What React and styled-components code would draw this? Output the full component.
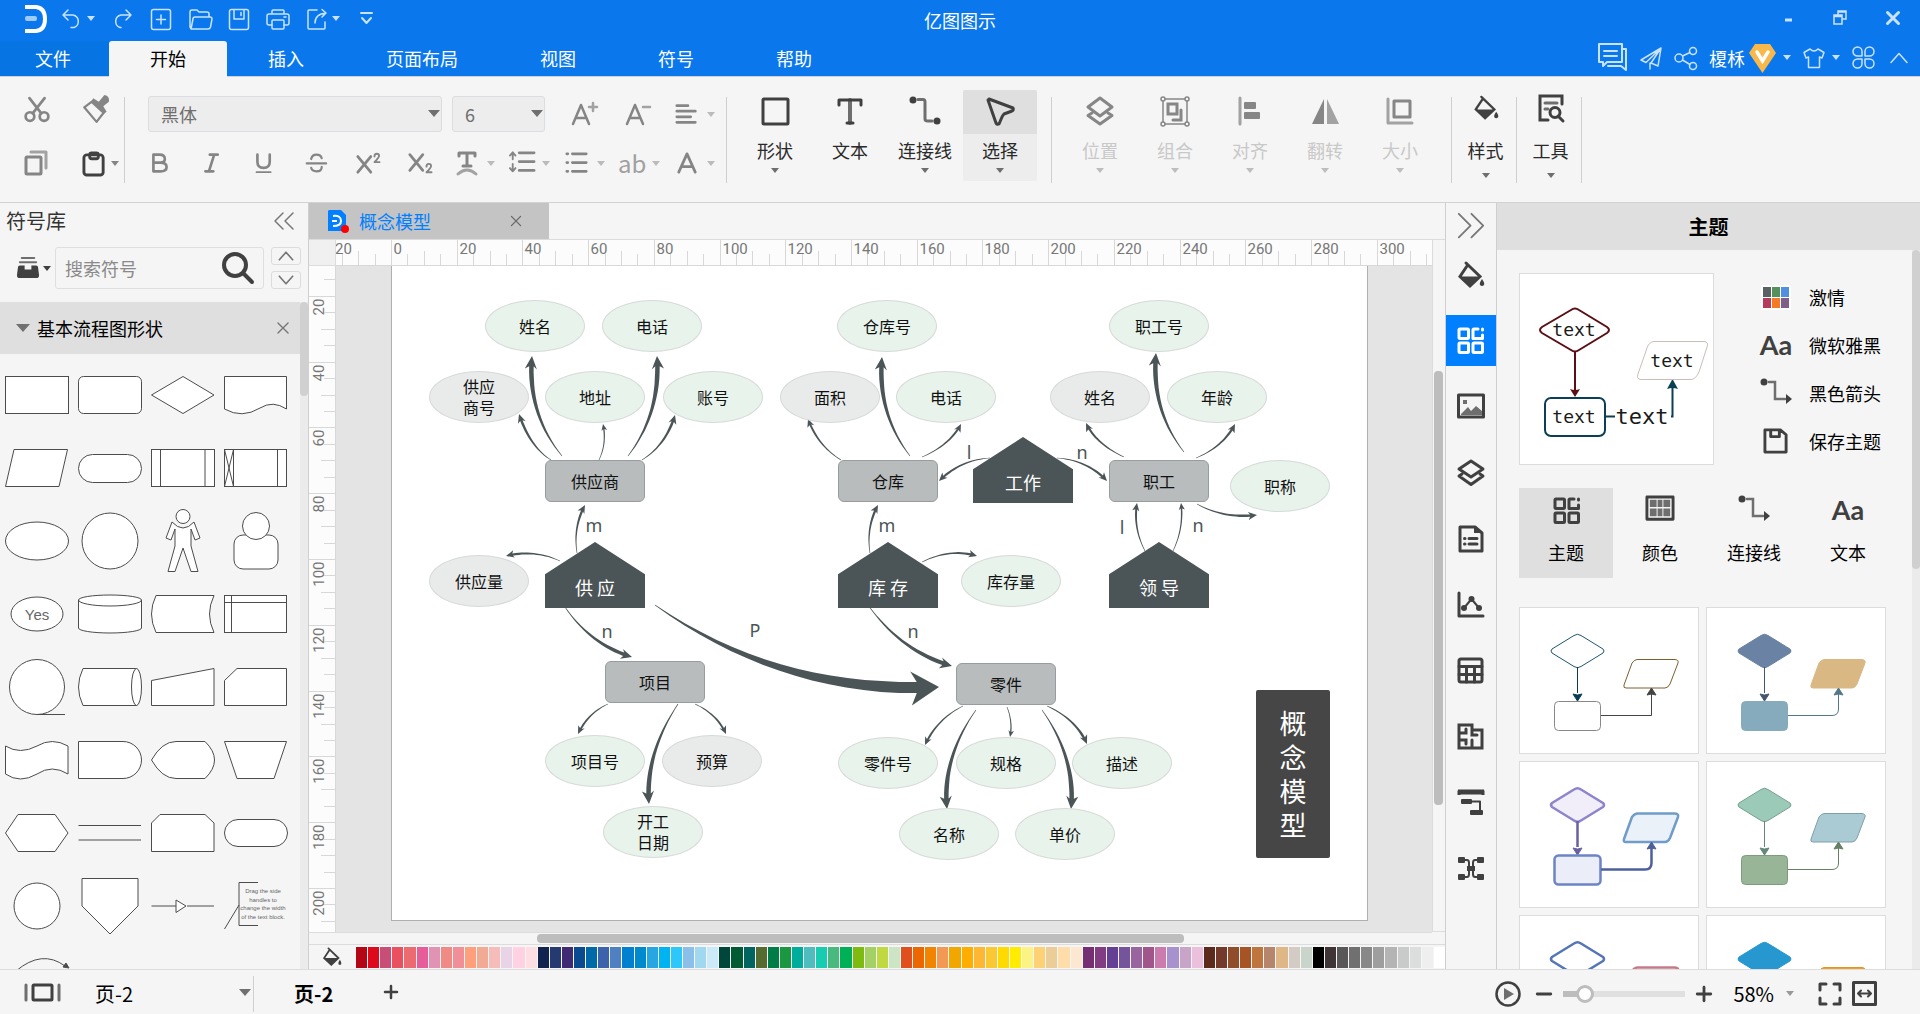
import React, { useState } from 'react'
import styled, { createGlobalStyle, css } from 'styled-components'

const GlobalStyle = createGlobalStyle`
  * {
    box-sizing: border-box;
  }

  body {
    margin: 0;
    background: #f5f5f5;
    color: #000;
    font-family: "Noto Sans CJK SC", "Noto Sans", sans-serif;
    font-size: 18px;
    line-height: 24px;
  }

  button, input, select {
    font: inherit;
    color: inherit;
    margin: 0;
    padding: 0;
    border: 0;
    background: none;
  }
`

/* ---------- icons ---------- */

const Svg = styled.svg`
  display: block;
  flex: none;
  fill: none;
  stroke: currentColor;
  stroke-width: ${props => props.$w || 2};
  stroke-linecap: round;
  stroke-linejoin: round;
  overflow: visible;

  .solid {
    fill: currentColor;
    stroke: none;
  }
  .soft {
    opacity: 0.75;
  }
`

const icons = {
  undo: <path d="M8 3 L3 8 L8 13 M3 8 H13 A6.5 6.5 0 0 1 14 20.500 H11" />,
  redo: <path d="M16 3 L21 8 L16 13 M21 8 H11 A6.500 6.500 0 0 0 10 20.500 H11" />,
  plusBox: <><rect x="2.500" y="2.500" width="19" height="20" rx="2" /><path d="M12 8 V17 M7.500 12.500 H16.500" /></>,
  folder: <path d="M3 22 L2 20 V5 Q2 3 4 3 H9 L11 5 H19 Q21 5 21 7 V10 M3 22 H20 Q22 22 22.500 20 L24 12 Q24 10 22 10 H7 Q5 10 5 12 L3 22" />,
  disk: <><rect x="2.500" y="2.500" width="19" height="20" rx="2" /><path d="M7 3 V12 H17 V3 M14 5.500 V8.500" /></>,
  print: <><path d="M6 7 V4 Q6 3 7 3 H17 Q18 3 18 4 V7 M6 18 H3 Q1 18 1 16 V9 Q1 7 3 7 H21 Q23 7 23 9 V16 Q23 18 21 18 H18" /><rect x="6" y="13" width="12" height="9" rx="1" /><path d="M18 10 H20" /></>,
  exportIcon: <path d="M12 3 H4 Q3 3 3 4 V21 Q3 22 4 22 H19 Q20 22 20 21 V15 M10 16 Q10 7 21 6 M17 2.500 L21 6 L17 10" />,
  more: <path d="M6 6 H17 M7 11 L11.500 16 L16 11" />,
  comment: <><path d="M2 2 H25 V20 H10 L6 24 V20 H2 Z M25 7 H29 V24 V28 L24 24 H11 M7 9 H20 M7 14 H20" /></>,
  send: <path d="M22 2 L2 14 L7 16.500 L22 2 L19 20 L12 17 L22 2 M11 17 V23" />,
  share: <><circle cx="5" cy="12" r="4" /><circle cx="19" cy="5" r="3.500" /><circle cx="19" cy="20" r="3.500" /><path d="M8.500 10 L16 6.500 M8.500 14 L16 18.500" /></>,
  shirt: <path d="M8 3 L2 6.500 L4 12 L6.500 11 V21.500 H17.500 V11 L20 12 L22 6.500 L16 3 Q12 7 8 3 Z" />,
  clover: <path d="M11 11 H6.500 A4.500 4.500 0 1 1 11 6.500 Z M14 11 H18.500 A4.500 4.500 0 1 0 14 6.500 Z M11 14 H6.500 A4.500 4.500 0 1 0 11 18.500 Z M14 14 H18.500 A4.500 4.500 0 1 1 14 18.500 Z" />,
  chevron: <path d="M4 16.500 L12 7.500 L20 16.500" />,
  minimize: <path d="M8 14 H15" strokeWidth="3" strokeLinecap="butt" />,
  restore: <path d="M5 9 H13 V18 H5 Z M5 10.500 H13 M9 9 V5 H17 V13 H13 M9 6 H17" strokeLinejoin="miter" />,
  close: <path d="M6.500 6.500 L17.500 17.500 M17.500 6.500 L6.500 17.500" />,
  cut: <><circle cx="5.500" cy="19" r="4" /><circle cx="18.500" cy="19" r="4" /><path d="M8 16 L19 2 M16 16 L5 2" /></>,
  painter: <><path d="M10 5 L2 11 L13 24 L20 15 Z" /><path className="solid" d="M10 3 L15 6 L20 0 Q25 1 24 6 L19 10 L22 15 L19 17 L8 7 Z" /></>,
  copy: <><rect x="2" y="7" width="15" height="17" rx="1" /><path className="soft" d="M7 2 H22 V18" /></>,
  paste: <><rect x="2" y="4" width="20" height="21" rx="3" /><rect x="8" y="2" width="9" height="6" rx="2" /></>,
  fontUp: <><path d="M2 23 L10 4 L18 23 M5 17 H15" /><path className="soft" d="M22 2 V10 M18 6 H26" /></>,
  fontDown: <><path d="M2 23 L10 4 L18 23 M5 17 H15" /><path className="soft" d="M18 6 H25" /></>,
  align: <path d="M2 4 H14 M2 10 H22 M2 16 H17 M2 22 H22" strokeWidth="3" />,
  bold: <path d="M5 3 H12 Q18 3 18 8 Q18 12 13 12 H5 M13 12 Q20 12 20 17 Q20 22 13 22 H5 V3" />,
  italic: <path d="M10 3 H19 M5 22 H14 M15 3 L9 22" />,
  underline: <><path d="M5 3 V11 Q5 18 12 18 Q19 18 19 11 V3" /><path d="M4 23 H20" strokeWidth="2" /></>,
  strike: <path d="M2 13 H24 M19 7 Q18 3 13 3 Q8 3 7 8 M19 17 Q19 22 13 22 Q8 22 7 18" />,
  sup: <><path d="M2 6 L16 23 M16 6 L2 23" /><path d="M20 6 Q20 3 22.500 3 Q25 3 25 5.500 Q25 7 20 12 H25.500" strokeWidth="2" /></>,
  sub: <><path d="M2 4 L16 21 M16 4 L2 21" /><path d="M20 17 Q20 14 22.500 14 Q25 14 25 16.500 Q25 18 20 23 H25.500" strokeWidth="2" /></>,
  textCurve: <><path d="M5 6 V3 H21 V6 M13 3 V16 M9 16 H17" /><path className="soft" d="M4 24 Q13 16 22 24" /></>,
  spacing: <><path d="M11 3 H27 M11 12.500 H27 M11 22 H27" strokeWidth="3" /><path d="M4 3 V10 M1 6 L4 2.500 L7 6 M4 15 V23 M1 19.500 L4 23 L7 19.500" strokeWidth="2" /></>,
  list: <><path d="M8 3 H23 M8 12.500 H23 M8 22 H23" strokeWidth="3" /><path d="M2 3 H3 M2 12.500 H3 M2 22 H3" /></>,
  fontColor: <path d="M3 22 L12 2 L21 22 M6 16 H18" strokeWidth="3" />,
  shape: <rect x="2" y="2" width="25" height="25" rx="1" />,
  text: <><path d="M3 8 V3 H25 V8" /><path className="soft" d="M14 3 V26" strokeWidth="4" /><path d="M11 26 H17" /></>,
  connector: <><circle className="solid" cx="3" cy="4" r="3.500" /><circle className="solid" cx="27" cy="25" r="3.500" /><path className="soft" d="M8 3.500 H13 Q15 3.500 15 6 V23 Q15 25 18 25 H22" /></>,
  arrowConnector: <><circle className="solid" cx="3" cy="4" r="3.500" /><path className="solid" d="M25 16 V26 L31 21 Z" /><path className="soft" d="M8 4 H14 V21 H24" strokeLinejoin="miter" /></>,
  select: <path d="M3 2 L27 11 Q28 13 26 14 L18 17 Q17 18 16 20 L13 27 Q11 28 10 26 L2 3 Z" />,
  position: <><path d="M14 1 L26 10 L14 19 L2 10 Z" /><path d="M6 16 L2 18.500 L14 27 L26 18.500 L22 16" /></>,
  group: <><path d="M3 3 H27 V28 H3 Z" strokeWidth="1.500" /><path d="M8 8 H17 V18 H8 Z M21 14 V24 H13" strokeLinejoin="miter" /><g fill="#f5f5f5" strokeWidth="1.500"><circle cx="3" cy="3" r="2" /><circle cx="27" cy="3" r="2" /><circle cx="3" cy="28" r="2" /><circle cx="27" cy="28" r="2" /></g></>,
  alignLeft: <><path className="soft" d="M4 1 V27" /><rect className="solid" x="8" y="5" width="12" height="7" rx="1" /><rect className="solid" x="8" y="15" width="16" height="7" rx="1" /></>,
  flip: <><path className="solid" d="M13 2 V27 H1 Z" /><path className="solid soft" d="M16 2 V27 H28 Z" /></>,
  size: <><path className="soft" d="M2 2 V26 H26" /><rect x="8" y="4" width="16" height="16" /></>,
  bucket: <><path d="M10 5 L3 15.500 L13 25 L23 15.500 L9 2" strokeLinejoin="miter" /><path className="solid" d="M3 15.500 H23 L13 26 Z" /><path className="solid" d="M25 18 Q28 22 27 24 Q25 26 23 24 Q22 22 25 18 Z" /></>,
  tool: <><path d="M25 10 V2 H3 V26 H11" strokeLinejoin="miter" /><path className="soft" d="M8 9 H20 M8 15 H11" /><circle cx="18" cy="18.500" r="5" /><path d="M21 22 L26 27" /></>,
  collapse: <path d="M10 2 L2 10 L10 18 M20 2 L12 10 L20 18" />,
  expand: <path d="M2 2 L15 15 L2 28 M16 2 L29 15 L16 28" />,
  library: <><path className="solid" d="M2 12 Q2 10 4 10 H9 V14 H16 V10 H21 Q23 10 23 12 L24 20 Q24 23 21 23 H4 Q1 23 1 20 Z" /><path className="soft" d="M6 2 H19 M4 6.500 H21" /></>,
  search: <><circle cx="13" cy="13" r="11" /><path d="M22 22 L30 30" /></>,
  grid: <><rect x="2" y="2" width="9.500" height="9.500" rx="1" /><path d="M21 2 H17 Q16 2 16 3 V11.500 H25.500 V8" /><rect x="2" y="16" width="9.500" height="9.500" rx="1" /><rect x="16" y="16" width="9.500" height="9.500" rx="1" /><path d="M25.500 2 V3" /></>,
  image: <><rect x="1.500" y="2" width="25" height="22" /><path className="solid soft" d="M4 21 L11 14 L14 18 L19 13 L25 18 V22 H4 Z" /><rect className="solid soft" x="6" y="7" width="4" height="4" /></>,
  layers: <><path d="M14 2 L26 10 L14 18 L2 10 Z" /><path d="M5 15 L2 17 L14 25.500 L26 17 L23 15" /></>,
  note: <><path d="M3 2 H18 L25 8 V26 H3 Z" /><path className="solid" d="M17 1 L26 8 H17 Z" /><path d="M12 13.500 H20 M12 19 H20 M7.500 13.500 H8 M7.500 19 H8" /></>,
  chart: <><path d="M2 2 V25 H26" /><path d="M7 17 L14.500 8 L22 17" strokeWidth="2" /><circle className="solid" cx="7" cy="17" r="3" /><circle className="solid" cx="14.500" cy="8" r="3" /><circle className="solid" cx="22" cy="17" r="3" /></>,
  table: <><rect x="2" y="2" width="23" height="23" rx="2" /><path d="M2 9.500 H25 M2 17.500 H25 M9.500 10 V25 M17.500 10 V25" /></>,
  plan: <path d="M2 2 H15 V7 H25 V25 H2 Z M2 10 H9 V6 M15 7 V12 H20 M2 17 H9 V21 M15 17 V25" strokeLinejoin="miter" />,
  gantt: <><path d="M2 6 V3 H26 V6" strokeWidth="3" strokeLinejoin="miter" strokeLinecap="butt" /><path d="M1 3 H27" strokeWidth="5" strokeLinecap="butt" /><rect className="solid" x="4" y="10" width="11" height="5" rx="1" /><path d="M15 12.500 H23 V21" strokeWidth="2" /><rect className="solid" x="13" y="21" width="13" height="5" rx="1" /></>,
  mind: <><path className="solid" d="M2 2 H7 Q8 2 8 3 V7 Q8 8 7 8 H2 Q1 8 1 7 V3 Q1 2 2 2 Z M21 2 H26 Q27 2 27 3 V7 Q27 8 26 8 H21 Q20 8 20 7 V3 Q20 2 21 2 Z M2 19 H7 Q8 19 8 20 V24 Q8 25 7 25 H2 Q1 25 1 24 V20 Q1 19 2 19 Z M21 19 H26 Q27 19 27 20 V24 Q27 25 26 25 H21 Q20 25 20 24 V20 Q20 19 21 19 Z M10 11 H18 V16 H10 Z" /><path d="M7 5 H10 Q12 5 12 8 V19 Q12 22 10 22 H7 M21 5 H18 Q16 5 16 8 V19 Q16 22 18 22 H21" strokeWidth="2" /></>,
  palette: <><rect x="2" y="2" width="27" height="23" /><path className="solid soft" d="M5 5 H12 V12.500 H5 Z M13 5 H18 V12.500 H13 Z M19 5 H26 V12.500 H19 Z M5 14 H12 V22 H5 Z M13 14 H18 V22 H13 Z M19 14 H26 V22 H19 Z" /></>,
  floppy: <path d="M2 2 H18 L24 7 V25 H2 Z M8 2 V9 H17 V2" />,
  pages: <><rect x="9" y="2" width="19" height="15" rx="1" /><path className="soft" d="M2 2 V17 M35 2 V17" /></>,
  plus: <path d="M8 2 V14 M2 8 H14" />,
  minus: <path d="M2 8 H14" />,
  play: <><circle cx="13" cy="13" r="11.500" /><path className="solid soft" d="M9 7 V19 L19 13 Z" /></>,
  full: <path d="M2 8 V2 H8 M16 2 H22 V8 M22 16 V22 H16 M8 22 H2 V16" />,
  fit: <><rect x="1.500" y="1.500" width="22" height="22" /><path d="M7 12.500 H18 M9 9.500 L6 12.500 L9 15.500 M16 9.500 L19 12.500 L16 15.500" strokeWidth="2" /></>,
}

function Icon({ name, box = 24, size = box, w }) {
  return (
    <Svg viewBox={`0 0 ${box} ${box}`} width={size} height={size} $w={w} aria-hidden="true">
      {icons[name]}
    </Svg>
  )
}

const Caret = styled.i`
  flex: none;
  width: 0;
  height: 0;
  border: ${props => props.$size || 4}px solid transparent;
  border-top: ${props => (props.$size || 4) + 1}px solid currentColor;
  border-bottom: 0;
`

/* ---------- title bar and tabs ---------- */

const Shell = styled.div`
  display: flex;
  flex-direction: column;
  height: 100vh;
  overflow: hidden;
`

const Header = styled.header`
  flex: none;
  background: #0a78ec;
  color: #c9e2ff;
  border-bottom: 1px solid #cfd3d8;
`

const TitleRow = styled.div`
  display: grid;
  grid-template-columns: 1fr auto 1fr;
  height: 41px;
`

const QuickBar = styled.div`
  display: flex;
  align-items: center;
  gap: 15px;
  padding: 0 0 4px 24px;

  > svg {
    flex: none;
  }
`

const SplitPair = styled.div`
  display: flex;
  align-items: center;
  gap: ${props => props.$gap || 3}px;
`

const IconButton = styled.button`
  display: flex;
  align-items: center;
  justify-content: center;
  color: ${props => props.$color || 'inherit'};
`

const AppTitle = styled.h1`
  margin: 0;
  padding-bottom: 2px;
  align-self: center;
  color: #fff;
  font-size: 18px;
  font-weight: 400;
`

const WindowButtons = styled.div`
  display: flex;
  justify-content: flex-end;
  padding: 0 1px 6px;

  button {
    width: 52px;
  }
`

const TabRow = styled.div`
  display: flex;
  height: 35px;
`

const Tab = styled.button`
  padding: 0 41px 2px;
  color: #fff;
  border-radius: 3px 3px 0 0;

  &:first-child {
    padding: 0 38px 2px 35px;
    background: #0774e4;
  }
  ${props => props.$active && css`
    margin-bottom: -1px;
    background: #f5f5f5;
    color: #000;
  `}
`

const Account = styled.div`
  display: flex;
  align-items: center;
  gap: 11px;
  margin-left: auto;
  padding: 0 9px 2px 0;
`

const UserButton = styled.button`
  display: flex;
  align-items: center;
  gap: 4px;
  color: #fff;

  i {
    margin-left: 3px;
    color: #c9e2ff;
  }
`

/* ---------- ribbon ---------- */

const Ribbon = styled.div`
  flex: none;
  display: flex;
  height: 126px;
  padding-top: 13px;
  border-bottom: 1px solid #d2d2d2;
  color: #858585;
`

const Group = styled.div`
  position: relative;
  display: flex;
  gap: 1px;
  padding: ${props => props.$pad || '0 15px 0 11px'};

  &::after {
    content: "";
    position: absolute;
    right: 0;
    top: 7px;
    height: 86px;
    border-right: 1px solid #cfcfcf;
  }
`

const Clipboard = styled.div`
  display: grid;
  grid-template-columns: 58px 43px;
  grid-auto-rows: 54px;
  align-items: center;
  margin-top: -8px;

  > * {
    justify-self: start;
  }
`

const FontRows = styled.div`
  display: flex;
  flex-direction: column;
  gap: 16px;
  padding-top: 6px;
`

const FontRow = styled.div`
  display: flex;
  align-items: center;
  gap: 10px;
  height: 36px;
  padding-left: 14px;
`

const SizeButtons = styled.div`
  display: flex;
  flex: 1;
  padding-left: 2px;
`

const SizeButton = styled(IconButton)`
  width: 54px;
`

const FormatRow = styled.div`
  display: flex;
  align-items: center;
  gap: 7px;
  height: 30px;
`

const FormatButtons = styled.div`
  display: flex;

  button {
    width: 52px;
  }
`

const DropButton = styled.button`
  display: flex;
  align-items: center;
  gap: 6px;
  width: 48px;
  margin-left: ${props => (props.$end ? 'auto' : 0)};

  i {
    color: #bbb;
  }
  svg, span {
    width: 28px;
  }
`

const Highlight = styled.span`
  color: #a0a0a0;
  font-size: 24px;
  text-align: center;
`

const SelectBox = styled.div`
  position: relative;
  width: ${props => props.$width};
  height: 36px;
  color: #6f6f6f;

  select {
    width: 100%;
    height: 100%;
    padding: 0 12px;
    border: 1px solid #dcdde2;
    border-radius: 3px;
    background: #ededed;
    appearance: none;
  }
  i {
    position: absolute;
    right: 2px;
    top: 14px;
    pointer-events: none;
  }
`

const BigButton = styled.button`
  display: flex;
  flex-direction: column;
  align-items: center;
  width: ${props => props.$width || 74}px;
  height: 91px;
  border-radius: 2px;
  color: ${props => (props.disabled ? '#c8c8c8' : '#2a2a2a')};
  background: ${props => (props.$active ? '#ededed' : 'none')};

  > span {
    display: flex;
    align-items: center;
    justify-content: center;
    width: 100%;
    height: 44px;
    margin-bottom: 4px;
    padding-bottom: ${props => (props.$width ? 8 : 2)}px;
    border-radius: 2px 2px 0 0;
    color: ${props => (props.disabled ? '#868686' : '#404040')};
    background: ${props => (props.$active ? '#dfdfdf' : 'none')};
  }
  i {
    margin-top: ${props => (props.$width ? 11 : 6)}px;
    color: ${props => (props.disabled ? '#bdbdbd' : '#6e6e6e')};
  }
`

/* ---------- work area ---------- */

const Body = styled.div`
  flex: 1;
  min-height: 0;
  display: grid;
  grid-template-columns: 309px minmax(0, 1fr) 52px 423px;
  grid-template-rows: minmax(0, 1fr);
`

const Library = styled.aside`
  display: flex;
  flex-direction: column;
  min-height: 0;
  overflow: hidden;
  border-right: 1px solid #cfcfcf;
`

const LibraryHead = styled.div`
  display: flex;
  align-items: center;
  justify-content: space-between;
  padding: 5px 15px 7px 6px;
  color: #333;
  font-size: 20px;
  line-height: 26px;
`

const SearchRow = styled.div`
  display: flex;
  align-items: center;
  gap: 5px;
  padding: 6px 7px 13px 17px;

  > button {
    gap: 3px;
    width: 33px;
    color: #404040;
  }
`

const SearchBox = styled.div`
  display: flex;
  align-items: center;
  flex: 1;
  min-width: 0;
  height: 42px;
  margin-right: 2px;
  padding: 0 9px;
  border: 1px solid #dfdfe2;
  border-radius: 3px;
  color: #404040;

  input {
    flex: 1;
    min-width: 0;
    outline: 0;
  }
  input::placeholder {
    color: #8a8a8a;
    opacity: 1;
  }
`

const Stepper = styled.div`
  display: flex;
  flex-direction: column;
  gap: 6px;

  button {
    width: 30px;
    height: 18px;
    border: 1px solid #dcdcdc;
    border-radius: 3px;
    color: #777;
  }
  button:last-child svg {
    transform: rotate(180deg);
  }
`

const Scrolled = styled.div`
  display: grid;
  grid-template-columns: minmax(0, 1fr) 8px;
  grid-template-rows: minmax(0, 1fr);
  flex: 1;
  min-height: 0;
`

const Rail = styled.div`
  background: #ebebeb;

  &::before {
    content: "";
    display: block;
    height: ${props => props.$thumb};
    border-radius: 4px;
    background: #d0d0d0;
  }
`

const Pane = styled.div`
  min-height: 0;
  overflow: hidden;
`

const Category = styled.div`
  display: flex;
  align-items: center;
  gap: 7px;
  height: 52px;
  padding: 0 6px 0 16px;
  background: #dfdfdf;

  i {
    color: #707070;
  }
  button {
    margin-left: auto;
    color: #777;
  }
`

const ShapeGrid = styled.div`
  display: grid;
  grid-template-columns: repeat(4, 73px);
  grid-auto-rows: 73px;
  padding-top: 4px;

  svg {
    width: 73px;
    height: 73px;
    fill: #fff;
    stroke: #4c4c4c;
    stroke-width: 1;
    overflow: visible;
  }
  text {
    fill: #666;
    stroke: none;
    text-anchor: middle;
    font-family: "Liberation Sans", sans-serif;
  }
`

const Editor = styled.main`
  display: flex;
  flex-direction: column;
  min-width: 0;
  min-height: 0;
`

const DocTabs = styled.div`
  flex: none;
  display: flex;
  height: 37px;
  border-bottom: 1px solid #dcdcdc;
`

const DocTab = styled.div`
  display: flex;
  align-items: center;
  width: 240px;
  padding: 0 23px 0 18px;
  gap: 8px;
  background: #c4c4c4;
  color: #0080ff;

  button {
    margin-left: auto;
    color: #666;
  }
`

const Stage = styled.div`
  flex: 1;
  min-height: 0;
  display: grid;
  grid-template-columns: 27px minmax(0, 1fr) 13px;
  grid-template-rows: 26px minmax(0, 1fr) 12px;
`

const RulerSvg = styled.svg`
  width: 100%;
  height: 100%;
  background: #fcfcfc;
  overflow: hidden;
  stroke: #d8d8d8;
  stroke-width: 1;

  text {
    fill: #777;
    stroke: none;
    font-family: Roboto, sans-serif;
    font-size: 15px;
  }
`

const Corner = styled.div`
  background: #f0f0f0;
  border-right: 1px solid #dcdcdc;
  border-bottom: 1px solid #dcdcdc;
`

const VScroll = styled.div`
  grid-row: 1 / span 2;
  grid-column: 3;
  padding: 131px 2px 126px 1px;
  border-left: 1px solid #dcdcdc;
  border-bottom: 1px solid #dcdcdc;

  &::before {
    content: "";
    display: block;
    height: 100%;
    border-radius: 4px;
    background: #bdbdbd;
  }
`

const HScroll = styled.div`
  grid-column: 1 / span 2;
  padding: 1px 248px 2px 228px;
  border-top: 1px solid #dcdcdc;

  &::before {
    content: "";
    display: block;
    height: 9px;
    border-radius: 4px;
    background: #bdbdbd;
  }
`

const Canvas = styled.div`
  overflow: hidden;
  background: #e4e4e4;
`

const Page = styled.div`
  position: relative;
  width: 977px;
  height: 655px;
  margin-left: 55px;
  border: 1px solid #b0b0b0;
  border-top: 0;
  background: #fff;
`

const Arrows = styled.svg`
  display: block;
  width: 975px;
  height: 654px;
  fill: #4b5456;
`

/* a node of the diagram, centred on its canvas coordinates */
const Node = styled.div`
  position: absolute;
  display: flex;
  align-items: center;
  justify-content: center;
  transform: translate(-50%, -50%);
  text-align: center;
  white-space: pre;
`

const Ellipse = styled(Node)`
  width: 100px;
  height: 52px;
  border: 1px solid #d6dad8;
  border-radius: 50%;
  background: ${props => (props.$gray ? '#e9ebea' : '#e8f3eb')};
  color: #111;
  font-size: 16px;
  line-height: 21px;
`

const Entity = styled(Node)`
  width: 100px;
  height: 42px;
  border: 1px solid #979c9e;
  border-radius: 6px;
  background: #b8bcbd;
  color: #111;
  font-size: 16px;
`

const Relation = styled(Node)`
  width: 100px;
  height: 66px;
  padding-top: 24px;
  background: #4b5456;
  clip-path: polygon(50% 0, 100% 49%, 100% 100%, 0 100%, 0 49%);
  color: #fff;
`

const Letter = styled(Node)`
  color: #4b5456;
  font-family: "Noto Sans", sans-serif;
`

const Banner = styled(Node)`
  width: 74px;
  height: 168px;
  border-radius: 2px;
  background: #464646;
  color: #fff;
  font-size: 27px;
  line-height: 34px;
`

const Swatches = styled.div`
  flex: none;
  display: flex;
  align-items: center;
  height: 25px;
  border-top: 1px solid #dcdcdc;
  color: #404040;

  > button {
    width: 47px;
    padding-right: 14px;
    justify-content: flex-end;
  }
  > div {
    flex: 1;
    display: grid;
    grid-template-columns: repeat(90, minmax(0, 1fr));
    column-gap: 1px;
    height: 21px;
  }
`

const Swatch = styled.button`
  background: ${props => props.$color};
`

/* ---------- right side ---------- */

const Strip = styled.nav`
  display: flex;
  flex-direction: column;
  border: 1px solid #cfcfcf;
  border-width: 0 1px;
  color: #404040;

  button {
    height: 51px;
    margin-bottom: 15px;
  }
  button:first-child {
    height: 46px;
    margin-bottom: 0;
    color: #777;
  }
`

const StripButton = styled(IconButton)`
  background: ${props => (props.$active ? '#0080ff' : 'none')};
  color: ${props => (props.$active ? '#fff' : 'inherit')};
`

const ThemePanel = styled.aside`
  display: flex;
  flex-direction: column;
  min-height: 0;

  h2 {
    flex: none;
    margin: 0;
    padding: 11px 0 10px;
    background: #dfdfdf;
    font-size: 20px;
    line-height: 26px;
    text-align: center;
  }
`

const ThemeTop = styled.div`
  display: flex;
  padding: 23px 22px;
`

const Preview = styled.div`
  width: 195px;
  height: 192px;
  border: 1px solid #dcdcdc;
  background: #fff;

  svg {
    display: block;
    overflow: visible;
  }
  text {
    fill: #1a1a1a;
    font-family: "DejaVu Sans Mono", monospace;
    font-size: 18px;
    text-anchor: middle;
  }
  .big {
    font-size: 22px;
  }
`

const ThemeOptions = styled.div`
  display: flex;
  flex-direction: column;
  margin-left: 45px;

  button {
    display: flex;
    align-items: center;
    gap: 16px;
    height: 48px;
  }
  button > span:first-child {
    display: flex;
    justify-content: center;
    width: 34px;
    color: #404040;
  }
`

const Aa = styled.b`
  color: #404040;
  font-family: Lato, sans-serif;
  font-size: 27px;
  font-weight: 700;
  line-height: 28px;
`

const ColorChips = styled.span`
  display: grid;
  grid-template-columns: repeat(3, 8px);
  grid-auto-rows: 10px;
  gap: 1px;
  padding: 2px;
  background: #fff;
`

const Chip = styled.i`
  background: ${props => props.$color};
`

const ThemeTabs = styled.div`
  display: flex;
  padding: 0 0 29px 22px;

  button {
    flex: none;
    display: flex;
    flex-direction: column;
    align-items: center;
    width: 94px;
    height: 90px;
    padding-top: 8px;
  }
  button:first-child {
    background: #dfdfdf;
  }
  button > span {
    display: flex;
    align-items: center;
    height: 28px;
    margin-bottom: 16px;
    color: #404040;
  }
`

const Cards = styled.div`
  display: grid;
  grid-template-columns: repeat(2, 180px);
  grid-auto-rows: 147px;
  gap: 7px;
  padding-left: 22px;
`

const Card = styled.button`
  border: 1px solid #dcdcdc;
  background: #fff;
  display: flex;

  svg {
    stroke-linejoin: round;
  }
`

/* ---------- status bar ---------- */

const StatusBar = styled.footer`
  flex: none;
  display: flex;
  align-items: center;
  height: 45px;
  padding-left: 24px;
  border-top: 1px solid #dcdcdc;
  color: #404040;
  font-size: 20px;
`

const PageSelect = styled.div`
  position: relative;
  width: 164px;
  height: 36px;
  margin: 4px 40px 0 29px;
  border-right: 1px solid #d0d0d0;
  color: #000;

  select {
    width: 100%;
    height: 100%;
    padding-left: 5px;
    appearance: none;
  }
  i {
    position: absolute;
    right: 2px;
    top: 13px;
    color: #707070;
    pointer-events: none;
  }
`

const PageTab = styled.button`
  margin-right: 50px;
  padding-top: 3px;
  color: #000;
  font-weight: 700;
`

const ZoomTools = styled.div`
  display: flex;
  align-items: center;
  margin-left: auto;
  padding: 3px 43px 0 0;
  gap: 10px;
`

const ZoomOut = styled(IconButton)`
  margin-left: 4px;
`

const ZoomSlider = styled.input`
  width: 122px;
  height: 18px;
  appearance: none;
  background: linear-gradient(90deg, #bdbdbd 0 22px, #e0e0e0 22px) center / 100% 6px no-repeat;
  border-radius: 3px;

  &::-webkit-slider-thumb {
    appearance: none;
    width: 18px;
    height: 18px;
    border: 3px solid #bdbdbd;
    border-radius: 50%;
    background: #fff;
  }
`

const ZoomValue = styled.button`
  display: flex;
  align-items: center;
  gap: 12px;
  margin: 0 14px 0 10px;
  color: #000;

  i {
    color: #999;
  }
`

/* ---------- data ---------- */

const tabs = ['文件', '开始', '插入', '页面布局', '视图', '符号', '帮助']

const insertTools = [
  ['形状', 'shape', 29, true],
  ['文本', 'text', 28, false],
  ['连接线', 'connector', 30, true],
  ['选择', 'select', 29, true],
]

const arrangeTools = [
  ['位置', 'position', 28],
  ['组合', 'group', 30],
  ['对齐', 'alignLeft', 28],
  ['翻转', 'flip', 29],
  ['大小', 'size', 28],
]

const stripTools = [
  ['bucket', '样式'], ['grid', '主题'], ['image', '图片'], ['layers', '图层'], ['note', '备注'],
  ['chart', '图表'], ['table', '表格'], ['plan', '平面图'], ['gantt', '甘特图'], ['mind', '思维导图'],
]

const palette = `
b50615 dc0a1b c74f77 ea5160 ec6b70 e75d99 e193b4 ef8b84 f18f98 ff9f7c f1ab94 f6bcba e9d3e6 ffd1e3 fddfe3
10224e 253a70 402a74 0a4a8f 0069a8 3d62ac 4f80c2 0080cf 008ace 27a6e2 00b4f1 2cc8fa 8abfea a0d8f0 cbe9f6
00463a 005a34 00655e 556b2f 007c47 1b9641 00ad9d 4fbdbd 17ccb0 49b97f 00b057 7fba11 a3d165 c0d940 cce5c5
e04f1e ed6700 f18400 f29a55 f2a600 ffad00 fdb733 fac832 ffda00 ffec00 fbf384 fdd174 ebcd98 ffddaa fce8d1
762f72 823c82 634096 74549a 98659e a0568a cb7bae a892ce c8a5c8 ebc0dc
5b2a1a 733a2c 904d29 a65426 be763e b5856c dfb786 d5cbc5 c9d5ca
000000 3f3536 595757 717071 888888 9e9e9f b4b4b5 c9caca dcdddd efefef ffffff
`.trim().split(/\s+/).map(hex => '#' + hex)

const shapes = [
  <rect x="5.5" y="18.5" width="63" height="37" />,
  <rect x="5.5" y="18.5" width="63" height="37" rx="5" />,
  <path d="M5.500 37 L37 18.500 L68 37 L37 55.500 Z" />,
  <path d="M5.500 18.500 H67.500 V51 Q54 42 41 50 Q23 61 5.500 51 Z" />,
  <path d="M14 18.500 H67.500 L59 55.500 H5.500 Z" />,
  <rect x="5.5" y="23.5" width="63" height="28" rx="14" />,
  <><rect x="5.5" y="18.500" width="63" height="37" /><path d="M14.500 18.500 V55.500 M59 18.500 V55.500" /></>,
  <><rect x="5.5" y="18.500" width="62" height="37" /><path d="M14.500 18.500 V55.500 M58.500 18.500 V55.500 M5.500 18.500 L14.500 55.500 M14.500 18.500 L5.500 55.500" /></>,
  <ellipse cx="37" cy="37" rx="31.500" ry="19" />,
  <circle cx="37" cy="37" r="28" />,
  <>
    <circle cx="37" cy="12.500" r="7" />
    <path d="M26 18 Q37 30 48 18 L54 34 L49 36 L45 25 V42 L52 67.500 H45 L37 44 L29 67.500 H22 L29 42 V25 L25 36 L20 34 Z" />
  </>,
  <><rect x="15" y="31" width="44" height="34" rx="9" /><circle cx="37" cy="22" r="13.500" /></>,
  <><ellipse cx="37" cy="37" rx="26" ry="17" /><text x="37" y="43" fontSize="15">Yes</text></>,
  <path d="M5.500 23 V51 A31.500 5 0 0 0 68.500 51 V23 A31.500 5 0 0 0 5.500 23 A31.500 6 0 0 0 68.500 23" />,
  <path d="M10 18.500 H68 Q59 37 68 55.500 H10 Q1 37 10 18.500 Z" />,
  <><rect x="5.5" y="18.500" width="62" height="37" /><path d="M12.500 18.500 V55.500 M5.500 25.500 H67.500" /></>,
  <><circle cx="37" cy="37" r="27.500" /><path d="M37 64.500 H65" /></>,
  <><path d="M10 18.500 H64 V55.500 H10 Q1 37 10 18.500 Z" /><ellipse cx="63.500" cy="37" rx="5" ry="18.500" /></>,
  <path d="M5.500 30.500 L68 18.500 V55.500 H5.500 Z" />,
  <path d="M18 18.500 H67.500 V55.500 H5.500 V30.500 Z" />,
  <path d="M5.500 23 Q20 32 37 23 Q52 14 68 23 V51 Q52 41 37 51 Q20 61 5.500 51 Z" />,
  <path d="M5.500 18.500 H50 A18.500 18.500 0 0 1 50 55.500 H5.500 Z" />,
  <path d="M5.500 37 Q16 18.500 30 18.500 H59 Q78 37 59 55.500 H30 Q16 55.500 5.500 37 Z" />,
  <path d="M5.500 18.500 H67.500 L55 55.500 H18 Z" />,
  <path d="M18 18.500 H55 L68 37 L55 55.500 H18 L5.500 37 Z" />,
  <path d="M5.500 29.500 H68 M5.500 44 H68" />,
  <path d="M14 18.500 H59 L68 27 V55.500 H5.500 V27 Z" />,
  <rect x="5.5" y="23.5" width="63" height="27" rx="13.5" />,
  <circle cx="37" cy="37" r="23" />,
  <path d="M9 9.500 H65 V37 L37 65 L9 37 Z" />,
  <><path d="M5.500 37 H30 M41 37 H68" /><path d="M30 31 V43.500 L40 37 Z" /></>,
  <>
    <path d="M39 13.500 H20 V56.500 H39" fill="none" /><path d="M20 36 L5.500 60" />
    <text fontSize="6"><tspan x="44" y="24">Drag the side</tspan><tspan x="44" y="33">handles to</tspan><tspan x="44" y="41">change the width</tspan><tspan x="44" y="50">of the text block.</tspan></text>
  </>,
  <><path d="M16 29 Q42 7 65 24" fill="none" /><path d="M66 21 L69 26 L63 25 Z" fill="#4c4c4c" /></>,
]

const ellipses = [
  ['姓名', 535, 326], ['电话', 652, 326], ['供应\n商号', 479, 397, 1], ['地址', 595, 397], ['账号', 713, 397],
  ['仓库号', 887, 326], ['面积', 830, 397, 1], ['电话', 946, 397],
  ['职工号', 1159, 326], ['姓名', 1100, 397, 1], ['年龄', 1217, 397], ['职称', 1280, 486],
  ['供应量', 479, 581, 1], ['库存量', 1011, 581],
  ['项目号', 595, 761], ['预算', 712, 761, 1], ['开工\n日期', 653, 832],
  ['零件号', 888, 763], ['规格', 1006, 763], ['描述', 1122, 763], ['名称', 949, 834], ['单价', 1065, 834],
]

const entities = [['供应商', 595, 481], ['仓库', 888, 481], ['职工', 1159, 481], ['项目', 655, 682], ['零件', 1006, 684]]

const relations = [['工作', 1023, 470], ['供 应', 595, 575], ['库 存', 888, 575], ['领 导', 1159, 575]]

const letters = [
  ['m', 594, 525], ['m', 887, 525], ['l', 969, 452], ['n', 1082, 452], ['l', 1122, 527], ['n', 1198, 525],
  ['n', 607, 631], ['n', 913, 631], ['P', 755, 630],
]

// x0, y0, control x, control y, x1, y1, width at the head
const arrows = [
  [551, 460, 530, 447, 519, 414, 2.5], [562, 456, 527, 413, 532, 356, 4.5], [599, 460, 607, 443, 603, 424, 1.3],
  [628, 456, 661, 413, 657, 356, 4.5], [642, 460, 666, 445, 675, 415, 2.5],
  [841, 460, 818, 446, 808, 419, 2], [910, 456, 877, 413, 882, 357, 4.5], [922, 457, 950, 445, 961, 424, 2],
  [1124, 457, 1096, 444, 1086, 423, 2.2], [1184, 452, 1151, 410, 1156, 353, 4.5], [1196, 458, 1223, 447, 1235, 424, 2.2],
  [990, 458, 960, 460, 939, 481, 2.2], [1057, 458, 1087, 460, 1107, 481, 2.2],
  [577, 553, 573, 527, 585, 505, 2.2], [560, 561, 534, 549, 506, 556, 2.2],
  [870, 553, 866, 527, 878, 505, 2.2], [922, 562, 950, 548, 977, 556, 2.2],
  [1197, 504, 1224, 519, 1257, 515, 2.4], [1145, 551, 1133, 528, 1137, 503, 2], [1173, 551, 1184, 528, 1181, 503, 1.5],
  [565, 607, 591, 645, 632, 657, 3.5], [655, 605, 783, 695, 939, 687, 11], [868, 605, 902, 652, 952, 666, 4],
  [608, 704, 588, 713, 578, 734, 2], [678, 704, 645, 754, 649, 804, 4.5], [695, 704, 717, 714, 726, 734, 2],
  [963, 706, 937, 719, 925, 745, 2], [976, 710, 942, 758, 947, 809, 4.5], [1007, 707, 1013, 722, 1010, 737, 1.3],
  [1042, 710, 1076, 758, 1071, 809, 4.5], [1047, 706, 1076, 719, 1087, 744, 2.4],
]

/* a curve that widens towards a barbed head */
function taperPath([x0, y0, cx, cy, x1, y1, width]) {
  const head = width > 8 ? 28 : 4 + width * 2
  const spread = width > 8 ? 17 : 1.6 + width
  const length = Math.hypot(x1 - cx, y1 - cy) * 2
  const end = 1 - (head * 0.8) / length
  const left = []
  const right = []
  const at = t => {
    const u = 1 - t
    const dx = 2 * u * (cx - x0) + 2 * t * (x1 - cx)
    const dy = 2 * u * (cy - y0) + 2 * t * (y1 - cy)
    const d = Math.hypot(dx, dy)
    return {
      x: u * u * x0 + 2 * u * t * cx + t * t * x1,
      y: u * u * y0 + 2 * u * t * cy + t * t * y1,
      tx: dx / d,
      ty: dy / d,
    }
  }
  for (let i = 0; i <= 16; i++) {
    const p = at((end * i) / 16)
    const half = 0.3 + (width / 2 - 0.3) * Math.min(1, (i / 16) * 1.15)
    left.push([p.x - p.ty * half, p.y + p.tx * half])
    right.unshift([p.x + p.ty * half, p.y - p.tx * half])
  }
  const tip = at(1)
  const bx = x1 - tip.tx * head
  const by = y1 - tip.ty * head
  const points = [
    ...left,
    [bx - tip.ty * spread, by + tip.tx * spread],
    [x1, y1],
    [bx + tip.ty * spread, by - tip.tx * spread],
    ...right,
  ]
  return 'M' + points.map(p => p.map(n => n.toFixed(1)).join(' ')).join('L') + 'Z'
}

const themes = [
  { diamond: ['#fff', '#1f566e'], box: ['#fff', '#888'], para: ['#fff', '#7a6030'], down: '#0a3d55', side: '#444', square: true },
  { diamond: ['#6a82a3', '#6a82a3'], box: ['#86abbd', '#86abbd'], para: ['#d9b884', '#d9b884'], down: '#44566f', side: '#557888' },
  { diamond: ['#f1eefa', '#8d84cb'], box: ['#ebeef8', '#6c84c5'], para: ['#ebf1f9', '#6f9cc9'], down: '#6a609f', side: '#4d609b', w: 2.5 },
  { diamond: ['#9ccab8', '#75a08f'], box: ['#98b697', '#7d9c7c'], para: ['#aacbd4', '#7fa0a9'], down: '#64877a', side: '#647f62' },
  { diamond: ['#fff', '#5576b6'], box: ['#fff', '#5576b6'], para: ['#fff', '#c67989'], down: '#5576b6', side: '#5576b6', w: 2.5 },
  { diamond: ['#2798cf', '#2798cf'], box: ['#2798cf', '#2798cf'], para: ['#f0a030', '#dd9525'], down: '#2798cf', side: '#2798cf' },
]

function ThemeArt({ theme }) {
  const w = theme.w || 1
  return (
    <svg width="178" height="145" fill="none" strokeWidth={w}>
      <path d="M54 27.500 Q57.500 25 61 27.500 L83 41 Q85 43 83 45 L61 58.500 Q57.500 61 54 58.500 L32 45 Q30 43 32 41 Z" fill={theme.diamond[0]} stroke={theme.diamond[1]} />
      <path d="M57.500 59 V85" stroke={theme.down} />
      <path d="M53 86 Q57.500 88 62 86 L57.500 93 Z" fill={theme.down} stroke={theme.down} strokeWidth="1" />
      <rect x="34.500" y="93.500" width="46" height="29" rx="4" fill={theme.box[0]} stroke={theme.box[1]} />
      <path d="M117 51.500 H155 Q159 52 158 55 L150 76 Q148 80 145 80 H106 Q103 80 104 77 L112 55 Q114 52 117 51.500 Z" fill={theme.para[0]} stroke={theme.para[1]} />
      <path d={theme.square ? 'M81 107.500 H131.500 V86' : 'M81 107.500 H125 Q131.500 107.500 131.500 101 V86'} stroke={theme.side} />
      <path d="M127 87 Q131.500 85 136 87 L131.500 80 Z" fill={theme.side} stroke={theme.side} strokeWidth="1" />
    </svg>
  )
}

const TICKS = Array.from({ length: 120 }, (_, i) => i - 4)

function HRuler() {
  return (
    <RulerSvg aria-hidden="true">
      {TICKS.map(i => {
        const x = Math.round(55 + i * 16.43) + 0.5
        const top = i % 4 === 0 ? 0 : i % 2 === 0 ? 11 : 14
        return (
          <g key={i}>
            <path d={`M${x} ${top} V26`} />
            {i % 4 === 0 && i <= 60 && <text x={Math.max(x + 2, -1)} y="14">{Math.abs(i * 5)}</text>}
          </g>
        )
      })}
      <path d="M0 25.500 H1800" />
    </RulerSvg>
  )
}

function VRuler() {
  return (
    <RulerSvg aria-hidden="true">
      {TICKS.map(i => {
        const y = Math.floor(i * 16.45 - 35.5) + 0.5
        const left = i % 4 === 0 ? 0 : i % 2 === 0 ? 12 : 15
        return (
          <g key={i}>
            <path d={`M${left} ${y} H27`} />
            {i > 0 && i <= 40 && i % 4 === 0 && (
              <text transform={`translate(15 ${y + 2}) rotate(-90)`} textAnchor="end">{i * 5}</text>
            )}
          </g>
        )
      })}
      <path d="M26.500 0 V1200" />
    </RulerSvg>
  )
}

const place = (x, y) => ({ left: x - 392, top: y - 266 })

function Diagram() {
  return (
    <Page>
      <Arrows viewBox="392 266 975 654">
        {arrows.map((a, i) => <path key={i} d={taperPath(a)} />)}
      </Arrows>
      {ellipses.map(([label, x, y, gray], i) => (
        <Ellipse key={i} style={place(x, y)} $gray={gray}>{label}</Ellipse>
      ))}
      {entities.map(([label, x, y]) => <Entity key={label} style={place(x, y)}>{label}</Entity>)}
      {relations.map(([label, x, y]) => <Relation key={label} style={place(x, y)}>{label}</Relation>)}
      {letters.map(([label, x, y], i) => <Letter key={i} style={place(x, y)}>{label}</Letter>)}
      <Banner style={place(1293, 774)}>{'概\n念\n模\n型'}</Banner>
    </Page>
  )
}

function TopBar() {
  const [active, setActive] = useState('开始')
  return (
    <Header>
      <TitleRow>
        <QuickBar>
          <svg width="21" height="32" viewBox="0 0 21 32" overflow="visible" aria-hidden="true">
            <path d="M1 4 H12 Q21 5 21 16 Q21 27 12 28 H1" fill="none" stroke="#fff" strokeWidth="4" />
            <rect x="1" y="13" width="12" height="5" rx="2" fill="#9ecbff" />
          </svg>
          <SplitPair>
            <IconButton aria-label="撤销"><Icon name="undo" w={1.5} /></IconButton>
            <Caret $size={4} />
          </SplitPair>
          <IconButton aria-label="重做"><Icon name="redo" w={1.5} /></IconButton>
          <IconButton aria-label="新建"><Icon name="plusBox" w={1.5} /></IconButton>
          <IconButton aria-label="打开"><Icon name="folder" w={1.5} /></IconButton>
          <IconButton aria-label="保存"><Icon name="disk" w={1.5} /></IconButton>
          <IconButton aria-label="打印"><Icon name="print" w={1.5} /></IconButton>
          <SplitPair>
            <IconButton aria-label="导出"><Icon name="exportIcon" w={1.5} /></IconButton>
            <Caret $size={4} />
          </SplitPair>
          <IconButton aria-label="更多"><Icon name="more" w={2} /></IconButton>
        </QuickBar>
        <AppTitle>亿图图示</AppTitle>
        <WindowButtons>
          <IconButton aria-label="最小化"><Icon name="minimize" /></IconButton>
          <IconButton aria-label="还原"><Icon name="restore" w={1.5} /></IconButton>
          <IconButton aria-label="关闭"><Icon name="close" w={3} /></IconButton>
        </WindowButtons>
      </TitleRow>
      <TabRow>
        {tabs.map(name => (
          <Tab key={name} $active={name === active} onClick={() => setActive(name)}>{name}</Tab>
        ))}
        <Account>
          <IconButton aria-label="评论"><Icon name="comment" box={31} /></IconButton>
          <IconButton aria-label="发送"><Icon name="send" w={1.5} /></IconButton>
          <IconButton aria-label="分享"><Icon name="share" w={1.5} /></IconButton>
          <UserButton>
            榎柇
            <svg width="27" height="30" viewBox="0 0 27 30" aria-hidden="true">
              <path d="M6 1 H21 L27 10 L13.500 30 L0 10 Z" fill="#f8b84a" />
              <path d="M8 9 L13.500 18 L19 9" fill="none" stroke="#fff" strokeWidth="3.500" strokeLinecap="round" />
            </svg>
            <Caret />
          </UserButton>
          <SplitPair $gap={6}>
            <IconButton aria-label="皮肤"><Icon name="shirt" w={1.5} /></IconButton>
            <Caret />
          </SplitPair>
          <IconButton aria-label="应用"><Icon name="clover" box={25} w={1.5} /></IconButton>
          <IconButton aria-label="收起"><Icon name="chevron" w={1.5} /></IconButton>
        </Account>
      </TabRow>
    </Header>
  )
}

function RibbonBar() {
  return (
    <Ribbon>
      <Group $pad="0 0 0 24px">
        <Clipboard>
          <IconButton aria-label="剪切"><Icon name="cut" box={24} size={26} w={2.5} /></IconButton>
          <IconButton aria-label="格式刷"><Icon name="painter" box={25} size={28} w={2} /></IconButton>
          <IconButton aria-label="复制"><Icon name="copy" box={26} w={3} /></IconButton>
          <SplitPair $gap={4}>
            <IconButton aria-label="粘贴" $color="#404040"><Icon name="paste" box={26} size={25} w={3} /></IconButton>
            <Caret />
          </SplitPair>
        </Clipboard>
      </Group>
      <Group $pad="0 6px 0 9px">
        <FontRows>
          <FontRow>
            <SelectBox $width="294px">
              <select aria-label="字体"><option>黑体</option></select>
              <Caret $size={6} />
            </SelectBox>
            <SelectBox $width="93px">
              <select aria-label="字号"><option>6</option></select>
              <Caret $size={6} />
            </SelectBox>
            <SizeButtons>
              <SizeButton aria-label="增大字号"><Icon name="fontUp" box={26} w={2.5} /></SizeButton>
              <SizeButton aria-label="减小字号"><Icon name="fontDown" box={26} w={2.5} /></SizeButton>
              <DropButton $end aria-label="对齐"><Icon name="align" box={26} size={24} /><Caret /></DropButton>
            </SizeButtons>
          </FontRow>
          <FormatRow>
            <FormatButtons>
              <IconButton aria-label="加粗"><Icon name="bold" box={25} size={22} w={3} /></IconButton>
              <IconButton aria-label="斜体"><Icon name="italic" box={25} size={22} w={3} /></IconButton>
              <IconButton aria-label="下划线"><Icon name="underline" box={25} size={22} w={3} /></IconButton>
              <IconButton aria-label="删除线"><Icon name="strike" box={25} size={22} w={2.5} /></IconButton>
              <IconButton aria-label="上标"><Icon name="sup" box={26} size={24} w={3} /></IconButton>
              <IconButton aria-label="下标"><Icon name="sub" box={26} size={24} w={3} /></IconButton>
            </FormatButtons>
            <DropButton aria-label="艺术字"><Icon name="textCurve" box={26} w={3} /><Caret /></DropButton>
            <DropButton aria-label="行距"><Icon name="spacing" box={28} size={26} /><Caret /></DropButton>
            <DropButton aria-label="列表"><Icon name="list" box={26} size={24} w={3} /><Caret /></DropButton>
            <DropButton><Highlight>ab</Highlight><Caret /></DropButton>
            <DropButton aria-label="字体颜色"><Icon name="fontColor" box={24} size={22} /><Caret /></DropButton>
          </FormatRow>
        </FontRows>
      </Group>
      <Group>
        {insertTools.map(([label, icon, box, drop]) => (
          <BigButton key={label} $active={icon === 'select'}>
            <span><Icon name={icon} box={box} w={3} /></span>
            {label}
            {drop && <Caret />}
          </BigButton>
        ))}
      </Group>
      <Group>
        {arrangeTools.map(([label, icon, box]) => (
          <BigButton key={label} disabled>
            <span><Icon name={icon} box={box} w={3} /></span>
            {label}
            <Caret />
          </BigButton>
        ))}
      </Group>
      <Group $pad="0 0 0 2px">
        <BigButton $width={63}><span><Icon name="bucket" box={28} size={26} w={2.5} /></span>样式<Caret /></BigButton>
      </Group>
      <Group $pad="0 0 0 2px">
        <BigButton $width={63}><span><Icon name="tool" box={28} w={3} /></span>工具<Caret /></BigButton>
      </Group>
    </Ribbon>
  )
}

function SymbolLibrary() {
  return (
    <Library>
      <LibraryHead>
        符号库
        <IconButton aria-label="收起面板" $color="#777"><Icon name="collapse" box={20} w={1.5} /></IconButton>
      </LibraryHead>
      <SearchRow>
        <IconButton aria-label="符号库列表"><Icon name="library" box={25} size={24} /><Caret /></IconButton>
        <SearchBox>
          <input type="text" aria-label="搜索符号" placeholder="搜索符号" />
          <IconButton aria-label="搜索"><Icon name="search" box={32} w={4} /></IconButton>
        </SearchBox>
        <Stepper>
          <IconButton aria-label="上一个"><Icon name="chevron" size={20} /></IconButton>
          <IconButton aria-label="下一个"><Icon name="chevron" size={20} /></IconButton>
        </Stepper>
      </SearchRow>
      <Scrolled>
        <Pane>
          <Category>
            <Caret $size={7} />
            基本流程图形状
            <IconButton aria-label="关闭"><Icon name="close" size={22} w={1.5} /></IconButton>
          </Category>
          <ShapeGrid>
            {shapes.map((shape, i) => <svg key={i} viewBox="0 0 73 73">{shape}</svg>)}
          </ShapeGrid>
        </Pane>
        <Rail $thumb="94px" />
      </Scrolled>
    </Library>
  )
}

function ThemeSide() {
  return (
    <ThemePanel>
      <h2>主题</h2>
      <Scrolled>
        <Pane>
          <ThemeTop>
            <Preview>
              <svg width="193" height="190" fill="none" strokeWidth="2">
                <path d="M51 36 Q55 33 59 36 L87 53 Q91 56 87 59 L59 76 Q55 79 51 76 L22 59 Q18 56 22 53 Z" stroke="#5a0f14" />
                <path d="M55 77 V118" stroke="#5a0f14" />
                <path d="M50 115 Q55 117 60 115 L55 123 Z" fill="#5a0f14" stroke="none" />
                <rect x="25" y="124" width="60" height="38" rx="6" stroke="#0b3f56" />
                <path d="M85 142.500 H95 M151 142.500 H152.500 V112" stroke="#0b3f56" />
                <path d="M147 115 Q152.500 113 158 115 L152.500 105 Z" fill="#0b3f56" />
                <path d="M134 67.500 H184 Q189 68 187 73 L179 98 Q176 105 171 105.500 H121 Q116 105 118 100 L127 74 Q129 68 134 67.500 Z" stroke="#cbbdb8" strokeWidth="1" />
                <text x="54" y="62">text</text>
                <text x="152" y="93">text</text>
                <text x="54" y="149">text</text>
                <text className="big" x="122" y="150">text</text>
              </svg>
            </Preview>
            <ThemeOptions>
              <button>
                <span>
                  <ColorChips>
                    {['#596163', '#56905b', '#4f90e0', '#b53c5c', '#f57a28', '#80608a'].map(c => <Chip key={c} $color={c} />)}
                  </ColorChips>
                </span>
                激情
              </button>
              <button><span><Aa>Aa</Aa></span>微软雅黑</button>
              <button><span><Icon name="arrowConnector" box={30} w={2.5} /></span>黑色箭头</button>
              <button><span><Icon name="floppy" box={27} size={26} w={3} /></span>保存主题</button>
            </ThemeOptions>
          </ThemeTop>
          <ThemeTabs>
            <button><span><Icon name="grid" box={27} w={3} /></span>主题</button>
            <button><span><Icon name="palette" box={31} size={30} w={3} /></span>颜色</button>
            <button><span><Icon name="arrowConnector" box={30} w={2.5} /></span>连接线</button>
            <button><span><Aa>Aa</Aa></span>文本</button>
          </ThemeTabs>
          <Cards>
            {themes.map((theme, i) => (
              <Card key={i} aria-label={`主题 ${i + 1}`}><ThemeArt theme={theme} /></Card>
            ))}
          </Cards>
        </Pane>
        <Rail $thumb="319px" />
      </Scrolled>
    </ThemePanel>
  )
}

export default function App() {
  const [zoom, setZoom] = useState(58)
  return (
    <Shell>
      <GlobalStyle />
      <TopBar />
      <RibbonBar />
      <Body>
        <SymbolLibrary />
        <Editor>
          <DocTabs>
            <DocTab>
              <svg width="24" height="24" viewBox="0 0 24 24" aria-hidden="true">
                <path d="M2 1 H14 L19 6 V22 H1 V2 Z" fill="#0080ff" />
                <path d="M6 7 Q14 6 14 12 Q14 17 6 17 M5 12 H10" fill="none" stroke="#fff" strokeWidth="2" />
                <circle cx="18" cy="20" r="4" fill="#f00" />
              </svg>
              概念模型
              <IconButton aria-label="关闭文档"><Icon name="close" size={20} w={1.5} /></IconButton>
            </DocTab>
          </DocTabs>
          <Stage>
            <Corner />
            <HRuler />
            <VScroll />
            <VRuler />
            <Canvas><Diagram /></Canvas>
            <HScroll />
          </Stage>
          <Swatches>
            <IconButton aria-label="填充"><Icon name="bucket" box={28} size={20} w={2.5} /></IconButton>
            <div>
              {palette.map((color, i) => <Swatch key={i} $color={color} aria-label={color} />)}
            </div>
          </Swatches>
        </Editor>
        <Strip>
          <IconButton aria-label="收起"><Icon name="expand" box={31} size={28} w={2} /></IconButton>
          {stripTools.map(([icon, label]) => (
            <StripButton key={icon} aria-label={label} $active={icon === 'grid'}>
              <Icon name={icon} box={28} w={3} />
            </StripButton>
          ))}
        </Strip>
        <ThemeSide />
      </Body>
      <StatusBar>
        <IconButton aria-label="页面视图">
          <Svg viewBox="0 0 37 19" width="37" height="19" $w={3}>{icons.pages}</Svg>
        </IconButton>
        <PageSelect>
          <select aria-label="页面"><option>页-2</option></select>
          <Caret $size={6} />
        </PageSelect>
        <PageTab>页-2</PageTab>
        <IconButton aria-label="添加页面"><Icon name="plus" box={16} w={2.5} /></IconButton>
        <ZoomTools>
          <IconButton aria-label="播放"><Icon name="play" box={26} w={2.5} /></IconButton>
          <ZoomOut aria-label="缩小"><Icon name="minus" box={16} size={18} w={2.5} /></ZoomOut>
          <ZoomSlider
            type="range"
            aria-label="缩放"
            min="10"
            max="400"
            value={zoom}
            onChange={e => setZoom(Number(e.target.value))}
          />
          <IconButton aria-label="放大"><Icon name="plus" box={16} size={18} w={2.5} /></IconButton>
          <ZoomValue>{zoom}%<Caret /></ZoomValue>
          <IconButton aria-label="全屏"><Icon name="full" box={24} w={3} /></IconButton>
          <IconButton aria-label="适应宽度"><Icon name="fit" box={25} w={3} /></IconButton>
        </ZoomTools>
      </StatusBar>
    </Shell>
  )
}
